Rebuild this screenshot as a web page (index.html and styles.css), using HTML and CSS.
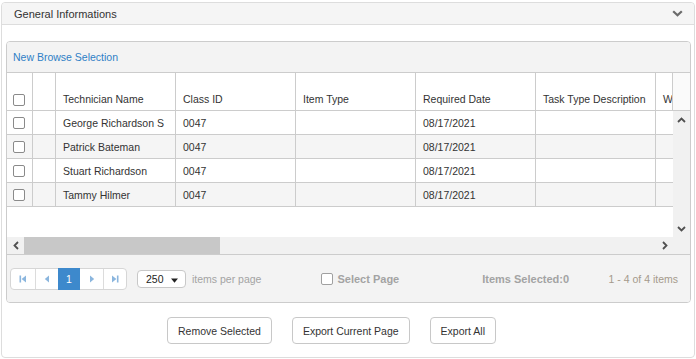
FILE: index.html
```html
<!DOCTYPE html>
<html lang="en">
<head>
    <meta charset="UTF-8">
    <meta name="viewport" content="width=device-width, initial-scale=1.0">
    <title>General Informations</title>
    <link rel="stylesheet" href="styles.css">
</head>
<body>
    <div class="panel">
        <div class="panel-head">
            <span class="panel-title">General Informations</span>
            <svg class="chev" width="11" height="7" viewBox="0 0 11 7"><polyline points="1.2,1.2 5.5,5.3 9.8,1.2" fill="none" stroke="#6b6b6b" stroke-width="2.2"/></svg>
        </div>

        <div class="panel-body">
            <div class="grid">
                <div class="grid-toolbar">
                    <a class="link" href="#">New Browse Selection</a>
                </div>

                <div class="grid-header">
                    <div class="header-wrap">
                        <table class="tbl">
                            <colgroup>
                                <col class="c-check"><col class="c-blank">
                                <col class="c-std"><col class="c-std"><col class="c-std">
                                <col class="c-std"><col class="c-std"><col class="c-std">
                            </colgroup>
                            <tr>
                                <th class="cb-cell"><span class="cb"></span></th>
                                <th></th>
                                <th>Technician Name</th>
                                <th>Class ID</th>
                                <th>Item Type</th>
                                <th>Required Date</th>
                                <th>Task Type Description</th>
                                <th>Work Order</th>
                            </tr>
                        </table>
                    </div>
                    <div class="header-pad"></div>
                </div>

                <div class="grid-content">
                    <div class="content-wrap">
                        <table class="tbl">
                            <colgroup>
                                <col class="c-check"><col class="c-blank">
                                <col class="c-std"><col class="c-std"><col class="c-std">
                                <col class="c-std"><col class="c-std"><col class="c-std">
                            </colgroup>
                            <tr>
                                <td class="cb-cell"><span class="cb"></span></td>
                                <td></td>
                                <td>George Richardson S</td>
                                <td>0047</td>
                                <td></td>
                                <td>08/17/2021</td>
                                <td></td>
                                <td></td>
                            </tr>
                            <tr class="alt">
                                <td class="cb-cell"><span class="cb"></span></td>
                                <td></td>
                                <td>Patrick Bateman</td>
                                <td>0047</td>
                                <td></td>
                                <td>08/17/2021</td>
                                <td></td>
                                <td></td>
                            </tr>
                            <tr>
                                <td class="cb-cell"><span class="cb"></span></td>
                                <td></td>
                                <td>Stuart Richardson</td>
                                <td>0047</td>
                                <td></td>
                                <td>08/17/2021</td>
                                <td></td>
                                <td></td>
                            </tr>
                            <tr class="alt">
                                <td class="cb-cell"><span class="cb"></span></td>
                                <td></td>
                                <td>Tammy Hilmer</td>
                                <td>0047</td>
                                <td></td>
                                <td>08/17/2021</td>
                                <td></td>
                                <td></td>
                            </tr>
                        </table>
                    </div>
                    <div class="vscroll">
                        <span class="sb-btn"><svg width="9" height="6" viewBox="0 0 9 6"><polyline points="1,5 4.5,1.5 8,5" fill="none" stroke="#505050" stroke-width="1.8"/></svg></span>
                        <span class="sb-btn"><svg width="9" height="6" viewBox="0 0 9 6"><polyline points="1,1 4.5,4.5 8,1" fill="none" stroke="#505050" stroke-width="1.8"/></svg></span>
                    </div>
                </div>

                <div class="hscroll">
                    <span class="sb-btn"><svg width="6" height="9" viewBox="0 0 6 9"><polyline points="5,1 1.5,4.5 5,8" fill="none" stroke="#505050" stroke-width="1.8"/></svg></span>
                    <span class="thumb"></span>
                    <span class="track-fill"></span>
                    <span class="sb-btn"><svg width="6" height="9" viewBox="0 0 6 9"><polyline points="1,1 4.5,4.5 1,8" fill="none" stroke="#505050" stroke-width="1.8"/></svg></span>
                    <span class="corner"></span>
                </div>

                <div class="pager">
                    <div class="pg-group">
                        <span class="pg-btn first"><svg width="8" height="8" viewBox="0 0 8 8"><rect x="0.5" y="0.5" width="1.6" height="7" fill="#8bb6de"/><polygon points="7,0.5 7,7.5 2.6,4" fill="#8bb6de"/></svg></span>
                        <span class="pg-btn"><svg width="6" height="8" viewBox="0 0 6 8"><polygon points="5,0.5 5,7.5 0.8,4" fill="#8bb6de"/></svg></span>
                        <span class="pg-btn active">1</span>
                        <span class="pg-btn"><svg width="6" height="8" viewBox="0 0 6 8"><polygon points="1,0.5 1,7.5 5.2,4" fill="#8bb6de"/></svg></span>
                        <span class="pg-btn"><svg width="8" height="8" viewBox="0 0 8 8"><polygon points="1,0.5 1,7.5 5.4,4" fill="#8bb6de"/><rect x="5.9" y="0.5" width="1.6" height="7" fill="#8bb6de"/></svg></span>
                    </div>
                    <div class="page-size">
                        <span>250</span>
                        <svg width="7" height="5" viewBox="0 0 7 5"><polygon points="0,0.5 7,0.5 3.5,4.8" fill="#222"/></svg>
                    </div>
                    <span class="per-page">items per page</span>
                    <span class="cb select-cb"></span>
                    <span class="muted-bold">Select Page</span>
                    <span class="muted-bold selected-count">Items Selected:0</span>
                    <span class="pg-info">1 - 4 of 4 items</span>
                </div>
            </div>

            <div class="actions">
                <button class="btn">Remove Selected</button>
                <button class="btn">Export Current Page</button>
                <button class="btn">Export All</button>
            </div>
        </div>
    </div>
</body>
</html>
```

FILE: styles.css
```css
body {
    margin: 2px 1px;
    font-family: "Liberation Sans", Arial, sans-serif;
    font-size: 10.5px;
    color: #333;
    background: #fff;
}
.panel {
    border: 1px solid #ddd;
    border-radius: 4px;
    height: 356px;
    box-sizing: border-box;
}
.panel-head {
    height: 21px;
    background: #f5f5f5;
    border-bottom: 1px solid #ddd;
    border-radius: 4px 4px 0 0;
    display: flex;
    align-items: center;
    justify-content: space-between;
    padding: 0 11px 0 12px;
}
.panel-title {
    font-size: 11px;
    color: #333;
}
.panel-body {
    padding: 16px 3px 0 4px;
}
.grid {
    border: 1px solid #ccc;
    border-radius: 4px;
    overflow: hidden;
}
.grid-toolbar {
    height: 30px;
    background: #f3f3f3;
    border-bottom: 1px solid #ccc;
    display: flex;
    align-items: center;
    padding-left: 6px;
}
.link {
    color: #2f80c6;
    text-decoration: none;
}
.grid-header {
    display: flex;
    height: 38px;
    border-bottom: 1px solid #ccc;
    box-sizing: border-box;
}
.header-wrap, .content-wrap {
    width: 666px;
    overflow: hidden;
}
.header-pad {
    width: 17px;
    border-left: 1px solid #ccc;
    background: #fafafa;
}
.tbl {
    width: 769px;
    table-layout: fixed;
    border-collapse: separate;
    border-spacing: 0;
}
.c-check { width: 26px; }
.c-blank { width: 23px; }
.c-std { width: 120px; }
.tbl th, .tbl td {
    border-right: 1px solid #ccc;
    padding: 0 7px;
    white-space: nowrap;
    overflow: hidden;
    text-align: left;
    font-weight: normal;
}
.tbl th {
    height: 37px;
    vertical-align: bottom;
    padding-bottom: 5px;
    box-sizing: border-box;
}
.tbl td {
    height: 24px;
    border-bottom: 1px solid #ccc;
    box-sizing: border-box;
}
.tbl .cb-cell {
    padding: 0 0 0 6px;
}
.tbl th.cb-cell {
    padding-bottom: 4px;
}
.tbl tr.alt td {
    background: #f5f5f5;
}
.cb {
    display: inline-block;
    width: 10px;
    height: 10px;
    border: 1px solid #8a8a8a;
    border-radius: 2px;
    background: #fff;
    vertical-align: middle;
}
.grid-content {
    display: flex;
    height: 126px;
}
.vscroll {
    width: 17px;
    background: #f1f1f1;
    display: flex;
    flex-direction: column;
    justify-content: space-between;
}
.sb-btn {
    width: 17px;
    height: 17px;
    display: flex;
    align-items: center;
    justify-content: center;
    flex: none;
}
.hscroll {
    display: flex;
    height: 17px;
    background: #f1f1f1;
}
.thumb {
    width: 196px;
    background: #c8c8c8;
}
.track-fill {
    flex: 1;
}
.corner {
    width: 17px;
    background: #f1f1f1;
}
.pager {
    height: 47px;
    background: #f3f3f3;
    border-top: 1px solid #ccc;
    display: flex;
    align-items: center;
    padding: 0 12px 0 3px;
}
.pg-group {
    display: flex;
    height: 22px;
    box-sizing: border-box;
    border: 1px solid #d6d6d6;
    border-radius: 4px;
    background: #fff;
}
.pg-btn {
    width: 22px;
    display: flex;
    align-items: center;
    justify-content: center;
    border-left: 1px solid #dcdcdc;
}
.pg-btn.first {
    width: 24px;
    border-left: none;
}
.pg-btn.active {
    background: #3d89cc;
    color: #fff;
    border-left: none;
    margin: -1px 0;
    width: 22px;
}
.pg-btn.active + .pg-btn {
    border-left: none;
    width: 23px;
}
.page-size {
    margin-left: 10px;
    width: 49px;
    height: 18px;
    box-sizing: border-box;
    border: 1px solid #c8c8c8;
    border-radius: 4px;
    background: #fff;
    display: flex;
    align-items: center;
    justify-content: space-between;
    padding: 1px 7px 0 8px;
    color: #222;
}
.page-size svg {
    margin-top: 3px;
}
.per-page {
    margin-left: 6px;
    color: #a3a3a3;
}
.select-cb {
    margin-left: 60px;
    border-color: #a0a0a0;
}
.muted-bold {
    margin-left: 4px;
    font-weight: bold;
    font-size: 11px;
    color: #a3a3a3;
}
.selected-count {
    margin-left: 83px;
}
.pg-info {
    margin-left: auto;
    color: #a59a8c;
    font-size: 10.5px;
}
.actions {
    display: flex;
    gap: 20px;
    padding: 14px 0 0 161px;
}
.btn {
    height: 27px;
    padding: 0 10px;
    background: #fff;
    border: 1px solid #c8c8c8;
    border-radius: 4px;
    font-family: "Liberation Sans", Arial, sans-serif;
    font-size: 10.5px;
    color: #333;
}
```
